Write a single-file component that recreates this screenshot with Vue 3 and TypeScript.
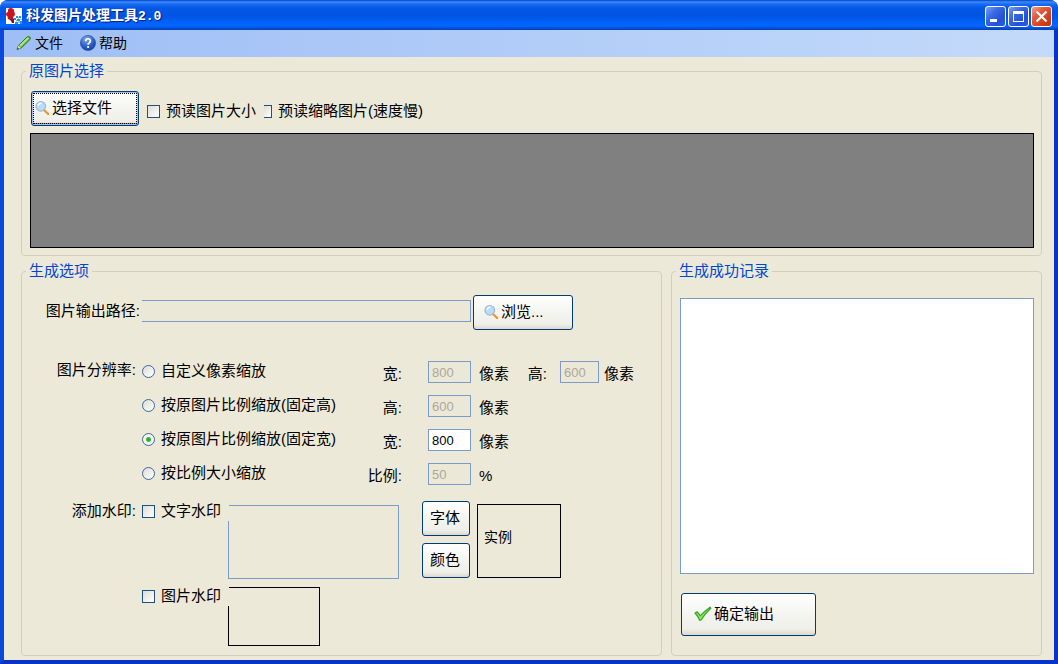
<script setup lang="ts">
import { ref } from 'vue'

type ScaleMode = 'custom' | 'fixedHeight' | 'fixedWidth' | 'percent'

interface SizeField {
  id: string
  label: string
  value: string
  unit: string
}

interface ScaleOption {
  mode: ScaleMode
  title: string
  fields: SizeField[]
}

const mode = ref<ScaleMode>('fixedWidth')
const readSize = ref(false)
const readThumb = ref(false)
const textMark = ref(false)
const imageMark = ref(false)
const outputPath = ref('')
const markText = ref('')
const log = ref('')

const options = ref<ScaleOption[]>([
  {
    mode: 'custom',
    title: '自定义像素缩放',
    fields: [
      { id: 'custom-w', label: '宽:', value: '800', unit: '像素' },
      { id: 'custom-h', label: '高:', value: '600', unit: '像素' },
    ],
  },
  {
    mode: 'fixedHeight',
    title: '按原图片比例缩放(固定高)',
    fields: [{ id: 'fixed-h', label: '高:', value: '600', unit: '像素' }],
  },
  {
    mode: 'fixedWidth',
    title: '按原图片比例缩放(固定宽)',
    fields: [{ id: 'fixed-w', label: '宽:', value: '800', unit: '像素' }],
  },
  {
    mode: 'percent',
    title: '按比例大小缩放',
    fields: [{ id: 'percent', label: '比例:', value: '50', unit: '%' }],
  },
])
</script>

<template>
  <div class="window">
    <header class="titlebar">
      <svg class="app-icon" width="16" height="16" viewBox="0 0 16 16" aria-hidden="true">
        <rect width="16" height="16" fill="#fff" />
        <path d="M2 2Q2 0 4.500 0Q8 0 8 3L9 6Q9 8 7 9L8 12Q7 13 4 12L2 11Q1 10 2 9Q0 8 0 6Q0 4 2 4Z" fill="#c8141c" />
        <path d="M4 11L8 11L8 15L6 15Z" fill="#8d1018" />
        <path d="M10 8h2v2h-2zM13 8h2v2h-2zM8 10h2v2h-2zM11 11h3v2h-3zM14 13h2v3h-2zM9 14h3v2h-3z" fill="#2f8fd8" />
        <path d="M12 9h1v2h-1zM10 12h1v2h-1zM12 13h2v2h-2zM14 11h2v1h-2z" fill="#8fd0ee" />
      </svg>
      <h1 class="title">科发图片处理工具<span class="version">2.0</span></h1>
      <div class="window-buttons">
        <button type="button" class="win-btn" aria-label="最小化">
          <svg width="19" height="19" viewBox="0 0 19 19"><rect x="4" y="12" width="7" height="3" fill="#fff" /></svg>
        </button>
        <button type="button" class="win-btn" aria-label="最大化">
          <svg width="19" height="19" viewBox="0 0 19 19">
            <rect x="4.500" y="5" width="10" height="9.500" fill="none" stroke="#fff" />
            <rect x="4" y="4" width="11" height="3" fill="#fff" />
          </svg>
        </button>
        <button type="button" class="win-btn close" aria-label="关闭">
          <svg width="19" height="19" viewBox="0 0 19 19">
            <path d="M4.500 4.500L14.500 14.500M14.500 4.500L4.500 14.500" stroke="#fff" stroke-width="2.200" />
          </svg>
        </button>
      </div>
    </header>

    <div class="frame">
      <nav class="menubar">
        <button type="button" class="menu-item">
          <svg width="16" height="16" viewBox="0 0 16 16" aria-hidden="true">
            <path d="M1 14.500L2.500 10.500L11 2Q12.500 .8 13.800 2Q15 3.300 13.900 4.500L5.200 13Z" fill="#5fb53a" stroke="#2d7a1c" stroke-width="1" />
            <path d="M4 11L12.300 2.900" stroke="#b5e69a" stroke-width="1.800" />
            <path d="M1 14.500L2.500 10.800L4.800 13Z" fill="#f1e3b8" />
            <path d="M.8 14.700L1.800 12.500L3 13.700Z" fill="#333" />
          </svg>
          <span>文件</span>
        </button>
        <button type="button" class="menu-item">
          <svg width="16" height="16" viewBox="0 0 16 16" aria-hidden="true">
            <defs>
              <radialGradient id="help-fill" cx=".4" cy=".25" r=".8">
                <stop offset="0" stop-color="#7fa9f0" />
                <stop offset=".6" stop-color="#2b60c8" />
                <stop offset="1" stop-color="#163f9e" />
              </radialGradient>
            </defs>
            <circle cx="8" cy="8" r="7.600" fill="url(#help-fill)" stroke="#1d479f" stroke-width=".6" />
            <path d="M5.600 6.200Q5.700 3.900 8 3.900Q10.400 3.900 10.400 6Q10.400 7.100 9.200 7.900Q8.100 8.500 8.100 9.700" fill="none" stroke="#fff" stroke-width="1.700" />
            <circle cx="8.100" cy="12" r="1.100" fill="#fff" />
          </svg>
          <span>帮助</span>
        </button>
      </nav>

      <main class="content">
        <fieldset class="group source">
          <legend>原图片选择</legend>
          <div class="source-bar">
            <button type="button" class="btn pick focused">
              <svg width="15" height="16" viewBox="0 0 15 16" aria-hidden="true">
                <path d="M9 10L13.200 14" stroke="#e59a2c" stroke-width="2.400" stroke-linecap="round" />
                <circle cx="5.800" cy="6.300" r="4.800" fill="#b9dcfa" stroke="#9db7d6" stroke-width="1.200" />
                <path d="M3 5.800Q3.500 3.200 6.400 3.300" stroke="#fff" stroke-width="1.500" fill="none" />
              </svg>
              <span>选择文件</span>
            </button>
            <label class="check">
              <input v-model="readSize" type="checkbox" />
              <span>预读图片大小</span>
            </label>
            <label class="check">
              <input v-model="readThumb" type="checkbox" class="half" />
              <span>预读缩略图片(速度慢)</span>
            </label>
          </div>
          <div class="preview"></div>
        </fieldset>

        <div class="columns">
          <fieldset class="group settings">
            <legend>生成选项</legend>

            <div class="path-row">
              <label class="row-label flush" for="output-path">图片输出路径:</label>
              <input id="output-path" v-model="outputPath" class="text-box path" type="text" disabled />
              <button type="button" class="btn browse">
                <svg width="15" height="16" viewBox="0 0 15 16" aria-hidden="true">
                  <path d="M9 10L13.200 14" stroke="#e59a2c" stroke-width="2.400" stroke-linecap="round" />
                  <circle cx="5.800" cy="6.300" r="4.800" fill="#b9dcfa" stroke="#9db7d6" stroke-width="1.200" />
                  <path d="M3 5.800Q3.500 3.200 6.400 3.300" stroke="#fff" stroke-width="1.500" fill="none" />
                </svg>
                <span>浏览...</span>
              </button>
            </div>

            <div class="scale" role="radiogroup" aria-labelledby="scale-label">
              <span id="scale-label" class="row-label">图片分辨率:</span>
              <div class="scale-rows">
                <div v-for="option in options" :key="option.mode" class="scale-row">
                  <label class="check choice">
                    <input v-model="mode" type="radio" name="scale" :value="option.mode" />
                    <span>{{ option.title }}</span>
                  </label>
                  <div v-for="field in option.fields" :key="field.id" class="size-field">
                    <label :for="field.id" class="size-label">{{ field.label }}</label>
                    <input
                      :id="field.id"
                      v-model="field.value"
                      class="text-box size"
                      type="text"
                      :disabled="mode !== option.mode"
                    />
                    <span class="unit">{{ field.unit }}</span>
                  </div>
                </div>
              </div>
            </div>

            <div class="marks">
              <span class="row-label">添加水印:</span>
              <div class="mark-rows">
                <div class="mark-row">
                  <label class="check cover">
                    <input v-model="textMark" type="checkbox" />
                    <span>文字水印</span>
                  </label>
                  <textarea v-model="markText" class="mark-text" aria-label="水印文字" disabled></textarea>
                  <div class="mark-buttons">
                    <button type="button" class="btn small">字体</button>
                    <button type="button" class="btn small">颜色</button>
                  </div>
                  <div class="sample">实例</div>
                </div>
                <div class="mark-row">
                  <label class="check cover">
                    <input v-model="imageMark" type="checkbox" />
                    <span>图片水印</span>
                  </label>
                  <div class="mark-image"></div>
                </div>
              </div>
            </div>
          </fieldset>

          <fieldset class="group record">
            <legend>生成成功记录</legend>
            <textarea v-model="log" class="log" aria-label="生成成功记录" readonly></textarea>
            <button type="button" class="btn confirm">
              <svg width="18" height="16" viewBox="0 0 18 16" aria-hidden="true">
                <path d="M1 7L3.200 5.800L6.300 9.800Q10 5.500 16 1.200L16.800 2.200Q11.500 7 7 14L5.600 14.300Q4 10 1 7Z" fill="#8bea55" stroke="#36a32e" stroke-width="1.200" stroke-linejoin="round" />
              </svg>
              <span>确定输出</span>
            </button>
          </fieldset>
        </div>
      </main>
    </div>
  </div>
</template>

<style>
body {
  margin: 0;
  background: #fff;
}
</style>

<style scoped>
* {
  box-sizing: border-box;
}

.window {
  display: flex;
  flex-direction: column;
  min-height: 100vh;
  overflow: hidden;
  border-radius: 8px 8px 0 0;
  background: #0a48dc;
  color: #000;
  font: 15px/20px "Liberation Sans", "Noto Sans CJK SC", sans-serif;
}

button,
input,
textarea {
  margin: 0;
  color: inherit;
  font: inherit;
}

.titlebar {
  display: flex;
  align-items: center;
  height: 30px;
  padding: 2px 6px 0;
  background: linear-gradient(#0842c4 0, #3a8cff 2px, #1a6cf4 4px, #0458e4 8px, #0054e3 16px, #0262f8 22px, #0466ff 26px, #0448c8 29px, #0240b4 30px);
}

.title {
  flex: 1;
  margin: 0 0 0 4px;
  color: #fff;
  font-size: 14px;
  font-weight: 700;
  line-height: 20px;
  text-shadow: 1px 1px 1px #0a1883;
}

.version {
  font-family: "Liberation Mono", monospace;
  font-size: 13px;
}

.window-buttons {
  display: flex;
  gap: 2px;
}

.win-btn {
  width: 21px;
  height: 21px;
  padding: 0;
  border: 1px solid #fff;
  border-radius: 3px;
  background: linear-gradient(135deg, #7c9ff2 0, #3a6ae6 35%, #2450d8 70%, #2a5ce8 100%);
}

.win-btn svg {
  display: block;
}

.win-btn.close {
  background: linear-gradient(135deg, #f0a088 0, #e4593a 35%, #d23c14 75%, #c23a12 100%);
}

.frame {
  display: flex;
  flex: 1;
  flex-direction: column;
  border: solid;
  border-width: 0 4px 4px;
  border-color: #0a48dc #0a32c8 #0a32c8 #0a48dc;
  background: #ece9d8;
}

.menubar {
  display: flex;
  align-items: center;
  gap: 17px;
  height: 27px;
  padding: 0 12px 2px;
  background: linear-gradient(90deg, #9ebef5, #c4dafa);
}

.menu-item {
  display: flex;
  align-items: center;
  gap: 3px;
  padding: 0;
  border: 0;
  background: none;
  font-size: 14px;
}

.content {
  display: flex;
  flex: 1;
  flex-direction: column;
  gap: 5px;
  padding: 4px 12px 4px 17px;
}

.group {
  min-width: 0;
  margin: 0;
  border: 1px solid #d0d0bf;
  border-radius: 4px;
}

.group > legend {
  margin-left: -4px;
  padding: 0 3px;
  color: #0046d5;
}

.source {
  padding: 10px 7px 7px 8px;
}

.source-bar {
  display: flex;
  align-items: flex-start;
  gap: 8px;
  padding-left: 1px;
}

.source-bar .check {
  margin-top: 10px;
}

.preview {
  height: 115px;
  margin-top: 7px;
  border: 1px solid #000;
  background: #808080;
}

.check {
  display: flex;
  align-items: center;
  gap: 6px;
  white-space: nowrap;
}

.check input {
  flex: none;
  width: 13px;
  height: 13px;
  appearance: none;
  border: 1px solid #1c5180;
  background: linear-gradient(135deg, #dcdcd7, #fff);
}

.check input.half {
  width: 8px;
  border-left: 0;
}

.check input[type="checkbox"]:checked {
  background: #21a121;
  box-shadow: inset 0 0 0 2px #fff;
}

.check input[type="radio"] {
  border-color: #3a6a9c;
  border-radius: 50%;
}

.check input[type="radio"]:checked {
  background: radial-gradient(circle, #21a121 0, #3cb83c 2px, #f4f4f0 3px);
}

.btn {
  display: flex;
  align-items: center;
  height: 35px;
  padding: 0;
  border: 1px solid #003c74;
  border-radius: 3px;
  background: linear-gradient(#fff 0, #f4f4f0 50%, #f0f0ea 85%, #dcd8cc 100%);
  white-space: nowrap;
}

.btn.pick {
  gap: 2px;
  width: 108px;
  padding: 0 0 2px 3px;
}

.btn.focused {
  position: relative;
  box-shadow: inset 0 0 0 1px #a4c0f0, inset 0 -2px 0 #6c8ce0;
}

.btn.focused::after {
  position: absolute;
  inset: 1px;
  border: 1px dotted #000;
  content: "";
}

.btn.browse {
  gap: 2px;
  width: 100px;
  margin-left: 2px;
  padding: 0 0 2px 10px;
}

.btn.small {
  justify-content: center;
  width: 48px;
  padding: 0 2px 2px 0;
}

.btn.confirm {
  flex: none;
  gap: 2px;
  width: 135px;
  height: 43px;
  margin: 19px 0 0 1px;
  padding: 0 0 2px 12px;
}

.columns {
  display: grid;
  flex: 1;
  grid-template-columns: minmax(0, 1fr) 371px;
  gap: 9px;
}

.settings {
  padding: 14px 0 9px;
}

.settings > legend {
  margin-left: 4px;
}

.row-label {
  flex: none;
  width: 120px;
  padding-right: 6px;
  text-align: right;
}

.row-label.flush {
  padding: 6px 2px 0 0;
}

.text-box {
  height: 22px;
  padding: 0 3px;
  border: 1px solid #7b9cc8;
  border-radius: 0;
  background: #fff;
  font-size: 13px;
}

.text-box:disabled {
  background: #ebe8d7;
  color: #aca899;
}

.path-row {
  display: flex;
  align-items: flex-start;
  padding-right: 88px;
}

.text-box.path {
  flex: 1;
  min-width: 0;
  margin-top: 5px;
  border-left: 0;
}

.scale {
  display: flex;
  margin-top: 24px;
}

.scale > .row-label {
  padding-top: 6px;
}

.scale-rows {
  flex: 1;
}

.scale-row {
  display: flex;
  align-items: center;
  height: 34px;
}

.choice {
  width: 216px;
}

.size-field {
  display: flex;
  align-items: center;
  padding-top: 2px;
}

.size-label {
  width: 44px;
  padding-top: 4px;
  text-align: right;
}

.text-box.size {
  width: 43px;
  margin: 0 8px 0 26px;
}

.unit {
  padding-top: 4px;
}

.size-field + .size-field .size-label {
  width: 38px;
}

.size-field + .size-field .size {
  width: 39px;
  margin: 0 5px 0 13px;
}

.marks {
  display: flex;
  align-items: flex-start;
  margin-top: 11px;
}

.mark-rows {
  display: flex;
  flex-direction: column;
  gap: 7px;
}

.mark-row {
  display: flex;
  align-items: flex-start;
}

.cover {
  z-index: 1;
  width: 87px;
  background: #ece9d8;
}

.mark-text {
  width: 171px;
  height: 74px;
  margin: 4px 0 0 -1px;
  padding: 2px;
  border: 1px solid #7b9cc8;
  border-radius: 0;
  background: transparent;
  resize: none;
}

.mark-buttons {
  display: grid;
  gap: 7px;
  margin-left: 23px;
}

.sample {
  display: flex;
  align-items: center;
  width: 84px;
  height: 74px;
  margin: 3px 0 0 7px;
  padding: 0 6px 8px;
  border: 1px solid #000;
  font-size: 14px;
}

.mark-image {
  width: 92px;
  height: 59px;
  margin: 1px 0 0 -1px;
  border: 1px solid #000;
}

.record {
  display: flex;
  flex-direction: column;
  align-items: flex-start;
  padding: 17px 7px 19px 8px;
}

.log {
  flex: 1;
  width: 100%;
  min-height: 120px;
  padding: 2px;
  border: 1px solid #7b9cc8;
  border-radius: 0;
  background: #fff;
  resize: none;
}
</style>
